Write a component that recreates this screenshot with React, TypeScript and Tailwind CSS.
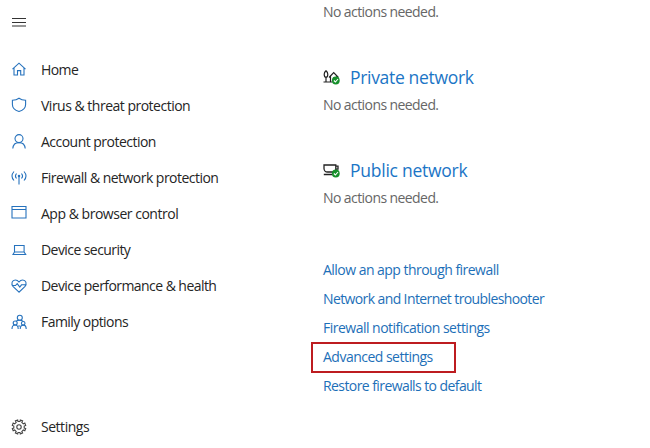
import type { ReactNode } from "react";

function Icon({ children, color = "#2672bd" }: { children: ReactNode; color?: string }) {
  return (
    <svg width="16" height="16" viewBox="0 0 16 16" fill="none" stroke={color} strokeWidth="1.1" className="shrink-0 overflow-visible">
      {children}
    </svg>
  );
}

const items: { label: string; track: string; icon: ReactNode }[] = [
  {
    label: "Home",
    track: "tracking-[-0.6px]",
    icon: <path d="M1.500 8.200 8 2.200l6.500 6M3 7v7h3.500V9.600h3.200V14H13V7" />,
  },
  {
    label: "Virus & threat protection",
    track: "tracking-[-0.5px]",
    icon: <path d="M8 1.200C6.200 2.600 4 3.200 1.400 3.200v4.200c0 3.400 2.600 5.800 6.600 7.100 4-1.300 6.600-3.700 6.600-7.100V3.200C12 3.200 9.800 2.600 8 1.200Z" />,
  },
  {
    label: "Account protection",
    track: "tracking-[-0.52px]",
    icon: (
      <>
        <circle cx="8" cy="5.600" r="4" />
        <path d="M1.800 15.500c.3-3.500 2.800-5.900 6.200-5.900s5.900 2.400 6.200 5.900" />
      </>
    ),
  },
  {
    label: "Firewall & network protection",
    track: "tracking-[-0.53px]",
    icon: (
      <>
        <path d="M8 7v8.500M5.500 9.500c-1.200-1.400-1.200-3.600 0-5M10.500 9.500c1.200-1.400 1.200-3.600 0-5M3 11.500c-2.400-2.700-2.400-6.300 0-9M13 11.500c2.400-2.700 2.400-6.300 0-9" />
        <circle cx="8" cy="7" r=".7" />
      </>
    ),
  },
  {
    label: "App & browser control",
    track: "tracking-[-0.48px]",
    icon: <path d="M1 1.500h14v11.500H1zM1 4.500h14" />,
  },
  {
    label: "Device security",
    track: "tracking-[-0.57px]",
    icon: <path d="M3.500 3.500h9.600v6.500H3.500zM3.500 10 2 12.500h12.700L13.100 10" />,
  },
  {
    label: "Device performance & health",
    track: "tracking-[-0.56px]",
    icon: (
      <path d="M8 14.200 2.200 8.600C-.4 5.600 1.200 2 4.300 2 6 2 7.100 2.800 8 4c.9-1.200 2-2 3.700-2 3.100 0 4.700 3.600 2.100 6.600ZM1.400 7.500h3.100l1.700-1.900 2.600 3.500 1.700-2.300h4.100" />
    ),
  },
  {
    label: "Family options",
    track: "tracking-[-0.56px]",
    icon: (
      <>
        <circle cx="8.800" cy="3.800" r="2.500" />
        <circle cx="4.200" cy="9" r="2" />
        <circle cx="12.200" cy="9.300" r="1.800" />
        <path d="M5 7.200c.8-.6 2-1 3.700-1s2.700.4 3.400 1.200M1 15c0-2.500 1.300-4 3.100-4s3.100 1.500 3.100 4M9.200 15c0-2.300 1.200-3.900 3-3.900s3 1.600 3 3.900M7.200 12h2" />
      </>
    ),
  },
];

const links = [
  { label: "Allow an app through firewall", track: "tracking-[-0.53px]" },
  { label: "Network and Internet troubleshooter", track: "tracking-[-0.61px]" },
  { label: "Firewall notification settings", track: "tracking-[-0.51px]" },
  { label: "Advanced settings", track: "tracking-[-0.51px]", marked: true },
  { label: "Restore firewalls to default", track: "tracking-[-0.58px]" },
];

function Check() {
  return (
    <g>
      <circle cx="12.800" cy="11.500" r="3.900" fill="#17902b" stroke="none" />
      <path d="m10.900 11.500 1.500 1.500 2.600-3" stroke="#fff" strokeWidth="1.100" />
    </g>
  );
}

function Network({ title, track, icon }: { title: string; track: string; icon: ReactNode }) {
  return (
    <section className="h-[93px]">
      <h2 className="flex h-7 items-center gap-[11px] text-[17.5px] text-[#1b75c6]">
        <Icon color="#222">
          {icon}
          <Check />
        </Icon>
        <span className={track}>{title}</span>
      </h2>
      <p className="mt-[3px] text-[14px] leading-[22px] tracking-[-0.58px] text-[#666]">No actions needed.</p>
    </section>
  );
}

export default function App() {
  return (
    <div className="flex h-[448px] w-[650px] overflow-hidden whitespace-nowrap bg-white font-['Open_Sans','Noto_Sans',sans-serif] text-[14px] text-[#252525]">
      <aside className="flex w-[323px] shrink-0 flex-col pl-[11px]">
        <button className="flex h-[51px] w-4 items-center pb-[7px]" aria-label="Menu">
          <Icon color="#333">
            <path d="M1 4.500h14M1 8.500h14M1 12h14" />
          </Icon>
        </button>
        <nav>
          {items.map((item) => (
            <a key={item.label} className="flex h-[36.100px] items-center gap-[14px]">
              <Icon>{item.icon}</Icon>
              <span className={item.track}>{item.label}</span>
            </a>
          ))}
        </nav>
        <a className="mt-auto flex h-[43px] items-center gap-[14px]">
          <Icon color="#444">
            <circle cx="8" cy="8" r="2.200" />
            <path d="m6.700 1 .3 1.500h2L9.300 1l2.300.9-.8 1.500 1.500 1.500 1.500-.8.900 2.300-1.500.6v2l1.500.5-.9 2.300-1.500-.8-1.500 1.500.8 1.500-2.300.9L9 13.500H7l-.3 1.400-2.300-.9.8-1.500L3.700 11l-1.500.8-.9-2.300L2.800 9V7l-1.500-.6.9-2.300 1.500.8 1.500-1.500-.8-1.500Z" />
          </Icon>
          <span className="tracking-[-0.47px]">Settings</span>
        </a>
      </aside>
      <main className="w-[327px]">
        <p className="h-[63px] pt-px text-[14px] leading-[22px] tracking-[-0.58px] text-[#666]">No actions needed.</p>
        <Network
          title="Private network"
          track="tracking-[-0.32px]"
          icon={
            <path d="M.5 13h8.500M3 13V8.500M3 1.800C1.800 2.800 1.200 3.900 1.200 5.300s.7 3 1.800 3 1.800-1.600 1.800-3S4.200 2.800 3 1.800ZM6 8.500 10.700 3.700l4.700 4.800M7.500 7v6h2M13.800 7v2M10 9h1.500" strokeWidth="1.200" />
          }
        />
        <Network
          title="Public network"
          track="tracking-[-0.25px]"
          icon={
            <path d="M1 3h11.800v4.500c0 1.500-1 2.500-2.500 2.500H4.500C2.500 10 1 8.500 1 6.500zM12.800 4.200h2.200v3h-2.200M.8 12.500h8.700" strokeWidth="1.300" />
          }
        />
        <div className="pt-[6px]">
          {links.map((link) => (
            <div key={link.label} className="relative flex h-[29px] items-center text-[#1d6fb8]">
              <a className={link.track}>{link.label}</a>
              {link.marked && <span className="absolute -left-3 top-0 h-[31px] w-[145px] border-2 border-[#bd1c20]" />}
            </div>
          ))}
        </div>
      </main>
    </div>
  );
}
